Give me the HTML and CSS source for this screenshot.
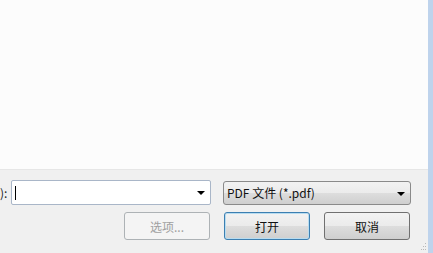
FILE: index.html
```html
<!DOCTYPE html>
<html lang="zh-CN">

<head>
    <meta charset="UTF-8">
    <title>打开</title>
    <link rel="stylesheet" href="styles.css">
</head>

<body>
    <div class="window">
        <div class="main">
            <!-- file list pane -->
            <div class="pane"></div>

            <div class="footer">
                <div class="row">
                    <span class="label">):</span>
                    <div class="combo edit">
                        <span class="caret"></span>
                        <span class="arrow"></span>
                    </div>
                    <div class="combo filter">
                        <span class="combo-text">PDF 文件 (*.pdf)</span>
                        <span class="arrow"></span>
                    </div>
                </div>
                <div class="row buttons">
                    <button class="btn disabled">选项...</button>
                    <button class="btn default">打开</button>
                    <button class="btn">取消</button>
                </div>
                <div class="grip">
                    <svg width="7" height="9" viewBox="0 0 7 9">
                        <rect x="5" y="1" width="1" height="1" fill="#b8b8b8" />
                        <rect x="3" y="4" width="1" height="1" fill="#b8b8b8" />
                        <rect x="5" y="4" width="1" height="1" fill="#b8b8b8" />
                        <rect x="1" y="7" width="1" height="1" fill="#b8b8b8" />
                        <rect x="3" y="7" width="1" height="1" fill="#b8b8b8" />
                        <rect x="5" y="7" width="1" height="1" fill="#b8b8b8" />
                    </svg>
                </div>
            </div>
        </div>
        <div class="edge"></div>
    </div>
</body>

</html>
```

FILE: styles.css
```css
* {
    box-sizing: border-box;
}

body {
    margin: 0;
    font-family: "Noto Sans CJK SC", "Noto Sans", sans-serif;
    font-size: 12px;
    color: #000;
    background-color: #f0f0f0;
}

.window {
    display: flex;
    width: 433px;
    height: 253px;
    overflow: hidden;
}

.main {
    flex: 1;
    display: flex;
    flex-direction: column;
}

.edge {
    width: 5px;
    background-color: #bed3ec;
}

.pane {
    height: 170px;
    background-color: #fcfcfc;
    border-bottom: 1px solid #e6e6e6;
}

.footer {
    flex: 1;
    position: relative;
    background-color: #f0f0f0;
    padding-top: 10px;
}

.row {
    display: flex;
    align-items: center;
}

.label {
    width: 11px;
    height: 25px;
    line-height: 25px;
    font-size: 12px;
    color: #222;
}

/* Combo boxes */
.combo {
    position: relative;
    height: 25px;
    display: flex;
    align-items: center;
}

.edit {
    width: 200px;
    background-color: #fff;
    border: 1px solid #a9b6c8;
    border-radius: 2px;
}

.caret {
    width: 1px;
    height: 14px;
    margin-left: 3px;
    background-color: #000;
}

.filter {
    width: 188px;
    height: 24px;
    margin-left: 12px;
    border: 1px solid #8a8a8a;
    border-radius: 3px;
    background: linear-gradient(#f2f2f2 0%, #ebebeb 50%, #dddddd 51%, #cfcfcf 100%);
    padding-left: 3px;
}

.combo-text {
    line-height: 22px;
    white-space: nowrap;
    color: #111;
}

.arrow {
    position: absolute;
    right: 5px;
    top: 10px;
    width: 0;
    height: 0;
    border-left: 4px solid transparent;
    border-right: 4px solid transparent;
    border-top: 4px solid #000;
}

/* Buttons */
.buttons {
    margin-top: 7px;
    padding-left: 124px;
    gap: 14px;
}

.btn {
    width: 86px;
    height: 28px;
    padding: 0;
    font-family: "Noto Sans CJK SC", "Noto Sans", sans-serif;
    font-size: 12px;
    color: #111;
    border: 1px solid #707070;
    border-radius: 3px;
    background: linear-gradient(#f2f2f2 0%, #ebebeb 50%, #dddddd 51%, #cfcfcf 100%);
}

.btn.default {
    border-color: #3c7fb1;
    box-shadow: inset 0 0 0 1px #b8dcf0;
}

.btn.disabled {
    color: #a0a0a0;
    border-color: #adb2b5;
    background: #f4f4f4;
}

.grip {
    position: absolute;
    right: 1px;
    bottom: 2px;
    line-height: 0;
}
```
